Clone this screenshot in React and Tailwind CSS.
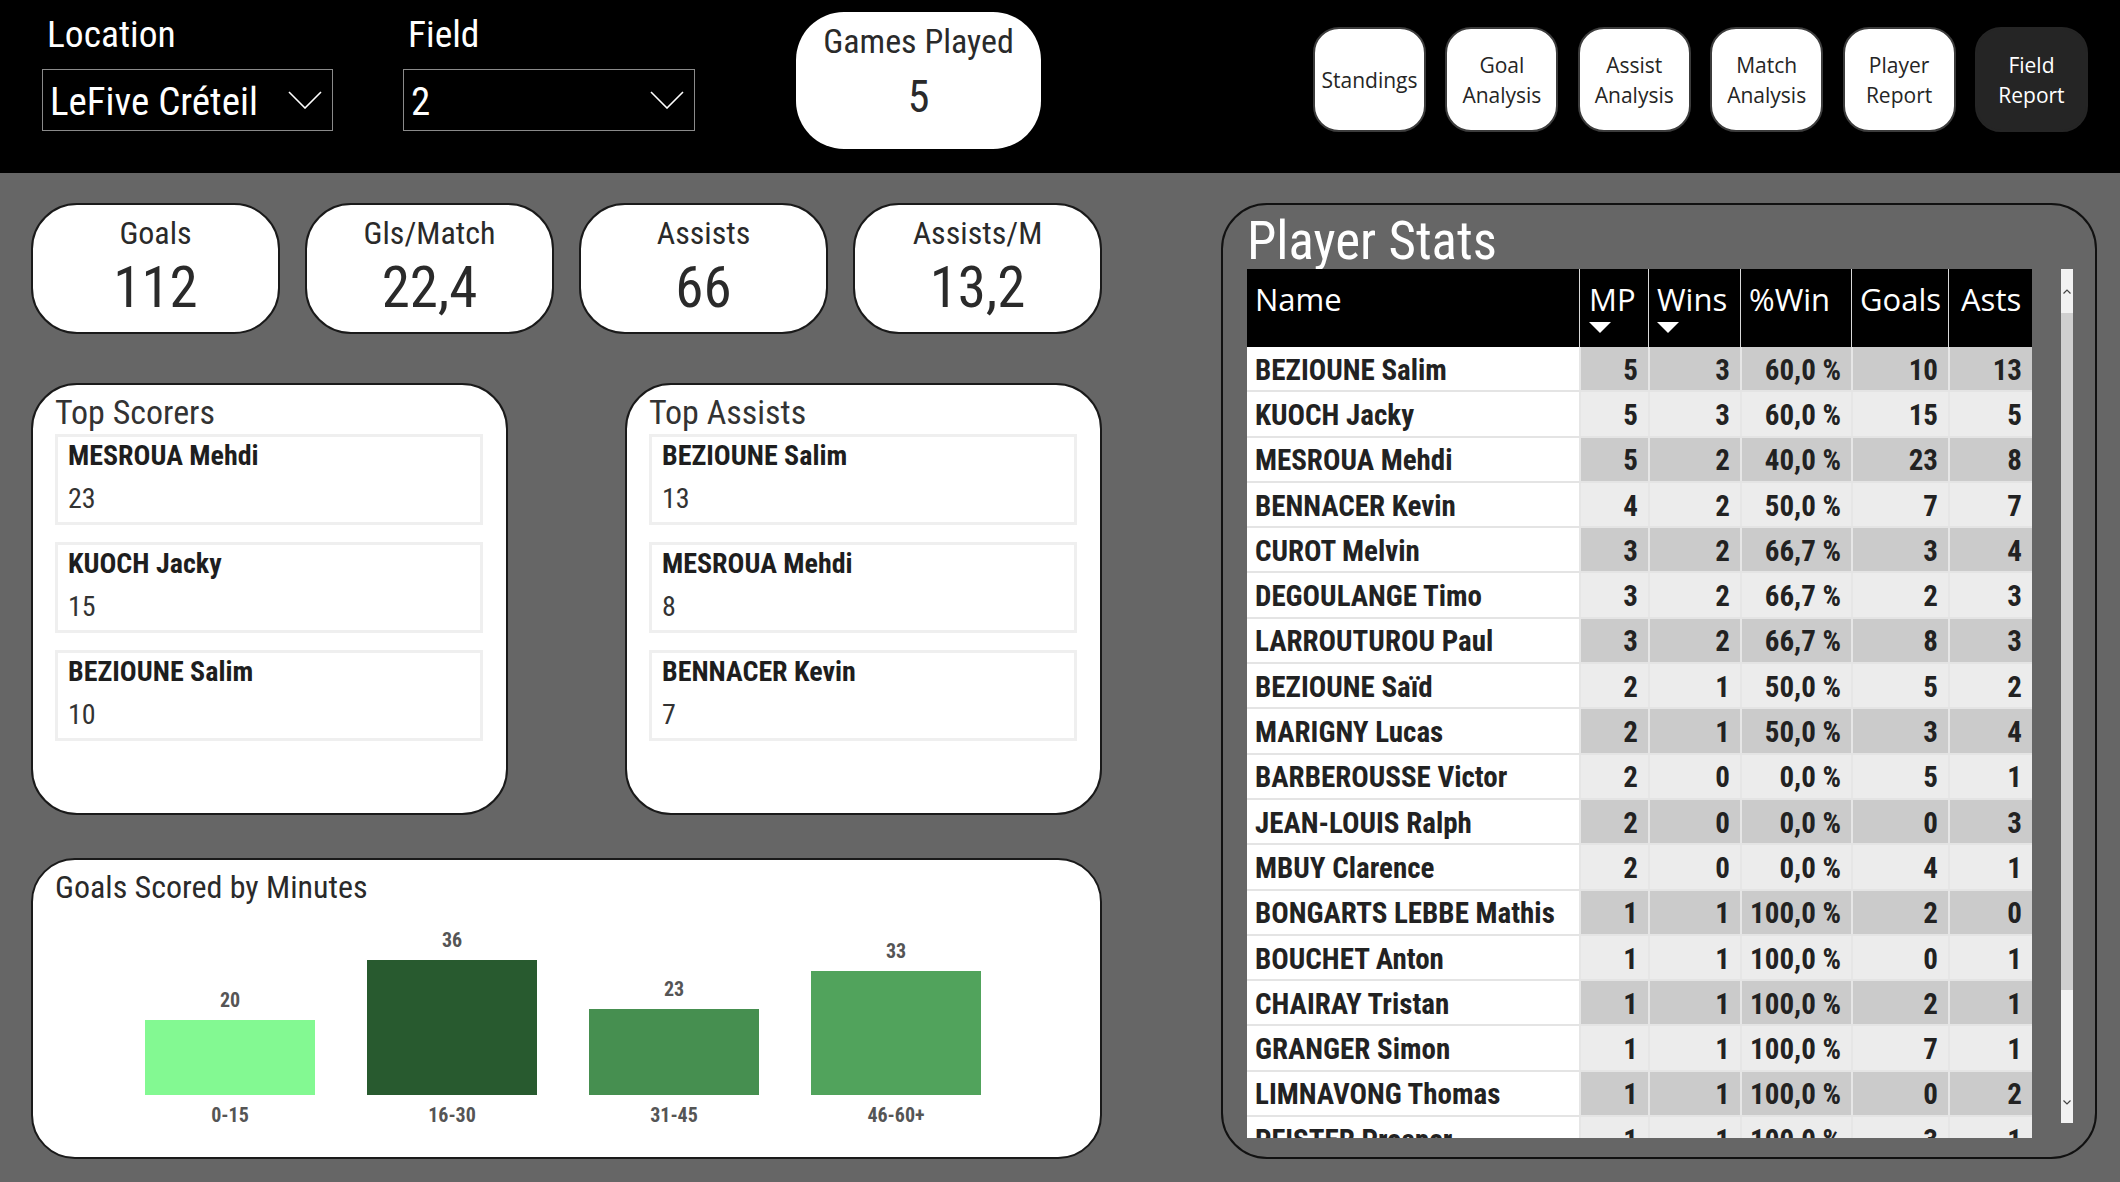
import React from "react";

const din = "font-['Roboto_Condensed','Roboto',sans-serif] font-stretch-[87.5%] whitespace-nowrap";
const segoe = "font-['Open_Sans',sans-serif] whitespace-nowrap";

const kpis = [
  { title: "Goals", value: "112" },
  { title: "Gls/Match", value: "22,4" },
  { title: "Assists", value: "66" },
  { title: "Assists/M", value: "13,2" },
];

const topScorers = [
  ["MESROUA Mehdi", 23],
  ["KUOCH Jacky", 15],
  ["BEZIOUNE Salim", 10],
];

const topAssists = [
  ["BEZIOUNE Salim", 13],
  ["MESROUA Mehdi", 8],
  ["BENNACER Kevin", 7],
];

const minutes = [
  { label: "0-15", value: 20, color: "bg-[#83f992]" },
  { label: "16-30", value: 36, color: "bg-[#285a2f]" },
  { label: "31-45", value: 23, color: "bg-[#468f50]" },
  { label: "46-60+", value: 33, color: "bg-[#51a35c]" },
];

const navItems = [
  ["Standings"],
  ["Goal", "Analysis"],
  ["Assist", "Analysis"],
  ["Match", "Analysis"],
  ["Player", "Report"],
  ["Field", "Report"],
];

const headers = [
  { label: "MP", pad: "pl-[9px]", sort: true },
  { label: "Wins", pad: "pl-[8px]", sort: true },
  { label: "%Win", pad: "pl-[8px]" },
  { label: "Goals", pad: "pl-[8px]" },
  { label: "Asts", pad: "pl-[12px]" },
];

const players = [
  ["BEZIOUNE Salim", 5, 3, "60,0 %", 10, 13],
  ["KUOCH Jacky", 5, 3, "60,0 %", 15, 5],
  ["MESROUA Mehdi", 5, 2, "40,0 %", 23, 8],
  ["BENNACER Kevin", 4, 2, "50,0 %", 7, 7],
  ["CUROT Melvin", 3, 2, "66,7 %", 3, 4],
  ["DEGOULANGE Timo", 3, 2, "66,7 %", 2, 3],
  ["LARROUTUROU Paul", 3, 2, "66,7 %", 8, 3],
  ["BEZIOUNE Saïd", 2, 1, "50,0 %", 5, 2],
  ["MARIGNY Lucas", 2, 1, "50,0 %", 3, 4],
  ["BARBEROUSSE Victor", 2, 0, "0,0 %", 5, 1],
  ["JEAN-LOUIS Ralph", 2, 0, "0,0 %", 0, 3],
  ["MBUY Clarence", 2, 0, "0,0 %", 4, 1],
  ["BONGARTS LEBBE Mathis", 1, 1, "100,0 %", 2, 0],
  ["BOUCHET Anton", 1, 1, "100,0 %", 0, 1],
  ["CHAIRAY Tristan", 1, 1, "100,0 %", 2, 1],
  ["GRANGER Simon", 1, 1, "100,0 %", 7, 1],
  ["LIMNAVONG Thomas", 1, 1, "100,0 %", 0, 2],
  ["PFISTER Prosper", 1, 1, "100,0 %", 3, 1],
];

const cols = "grid grid-cols-[332px_69px_92px_111px_97px_84px]";

function Chevron() {
  return (
    <svg width="34" height="18" viewBox="0 0 34 18">
      <polyline points="1,1 17,17 33,1" fill="none" stroke="white" strokeWidth="1.6" />
    </svg>
  );
}

function Dropdown({ value }) {
  return (
    <div className="mt-[13px] h-[62px] border border-[#8a8a8a] flex items-center justify-between pl-[7px] pr-[10px]">
      <span className={`${din} text-white text-[39px] leading-none pt-[4px]`}>{value}</span>
      <Chevron />
    </div>
  );
}

function SortArrow() {
  return (
    <svg width="22" height="11" viewBox="0 0 22 11" className="mt-[3px]">
      <polygon points="0,0 22,0 11,11" fill="white" />
    </svg>
  );
}

function TopList({ title, items }) {
  return (
    <div className="w-[477px] h-[432px] bg-white border-2 border-[#1a1a1a] rounded-[46px] pt-[7px] pl-[22px]">
      <div className={`${din} text-[34px] leading-[40px] text-[#333]`}>{title}</div>
      <div className="mt-[2px] flex flex-col gap-[17px]">
        {items.map(([name, val]) => (
          <div key={name} className="w-[428px] h-[91px] border-[3px] border-[#efefef] pl-[10px] pt-[3px]">
            <div className={`${din} font-bold text-[28px] leading-[32px] text-[#1e1e1e]`}>{name}</div>
            <div className={`${din} text-[28px] leading-[32px] text-[#333] mt-[11px]`}>{val}</div>
          </div>
        ))}
      </div>
    </div>
  );
}

export default function App() {
  return (
    <div className="w-[2120px] h-[1182px] overflow-hidden flex flex-col">
      {/* Header */}
      <header className="h-[173px] bg-black flex items-start shrink-0">
        <div className="ml-[42px] pt-[12px] w-[291px]">
          <div className={`${din} text-white text-[37.5px] leading-[44px] pl-[5px]`}>Location</div>
          <Dropdown value="LeFive Créteil" />
        </div>
        <div className="ml-[70px] pt-[12px] w-[292px]">
          <div className={`${din} text-white text-[37.5px] leading-[44px] pl-[5px]`}>Field</div>
          <Dropdown value="2" />
        </div>
        <div className="ml-[101px] mt-[12px] w-[245px] h-[137px] bg-white rounded-[48px] flex flex-col items-center pt-[9px]">
          <div className={`${din} text-[34px] leading-[40px] text-[#2a2a2a]`}>Games Played</div>
          <div className={`${din} text-[44px] leading-[50px] text-[#2a2a2a] mt-[11px]`}>5</div>
        </div>
        <nav className="ml-[272px] mt-[27px] flex gap-[19.4px]">
          {navItems.map((lines, i) => {
            const active = i === navItems.length - 1;
            return (
              <div
                key={lines.join(" ")}
                className={`w-[113px] h-[105px] rounded-[26px] border-2 flex flex-col items-center justify-center ${segoe} text-[21px] leading-[30px] ${
                  active ? "bg-[#252525] border-[#252525] text-white" : "bg-white border-[#3c3c3c] text-[#252525]"
                }`}
              >
                {lines.map((l) => (
                  <span key={l}>{l}</span>
                ))}
              </div>
            );
          })}
        </nav>
      </header>

      {/* Body */}
      <main className="flex-1 bg-[#666666] flex items-start pt-[30px] pl-[31px]">
        <div className="w-[1071px] flex flex-col">
          {/* KPI cards */}
          <div className="flex gap-[25px]">
            {kpis.map((k) => (
              <div key={k.title} className="w-[249px] h-[131px] bg-white border-2 border-[#1a1a1a] rounded-[46px] flex flex-col items-center pt-[8px]">
                <div className={`${din} text-[32px] leading-[40px] text-[#2a2a2a]`}>{k.title}</div>
                <div className={`${din} text-[57px] leading-[60px] text-[#2a2a2a] mt-[5px]`}>{k.value}</div>
              </div>
            ))}
          </div>

          {/* Top lists */}
          <div className="mt-[49px] flex gap-[117px]">
            <TopList title="Top Scorers" items={topScorers} />
            <TopList title="Top Assists" items={topAssists} />
          </div>

          {/* Goals by minutes */}
          <div className="mt-[43px] h-[301px] bg-white border-2 border-[#1a1a1a] rounded-[44px] pt-[7px] pl-[22px] flex flex-col">
            <div className={`${din} text-[32px] leading-[40px] text-[#2a2a2a]`}>Goals Scored by Minutes</div>
            <div className="h-[228px] flex items-end gap-[52px] pl-[90px]">
              {minutes.map((m) => (
                <div key={m.label} className="w-[170px] flex flex-col items-center">
                  <div className={`${din} font-bold text-[20px] leading-[28px] text-[#555] mb-[6px]`}>{m.value}</div>
                  <div className={`w-full ${m.color}`} style={{ height: `${m.value * 3.75}px` }} />
                  <div className={`${din} font-bold text-[20px] leading-[40px] text-[#555]`}>{m.label}</div>
                </div>
              ))}
            </div>
          </div>
        </div>

        {/* Player stats */}
        <div className="ml-[119px] w-[876px] h-[956px] border-2 border-[#111] rounded-[46px] pt-[8px] pl-[24px] flex flex-col">
          <div className={`${din} text-white text-[53px] leading-[56px]`}>Player Stats</div>
          <div className="flex items-start">
            <div className="w-[785px] h-[869px] overflow-hidden">
              <div className={`${cols} h-[78px] bg-black text-white ${segoe} text-[31px] leading-[40px]`}>
                <div className="pl-[8px] pt-[10px]">Name</div>
                {headers.map((h) => (
                  <div key={h.label} className={`border-l border-[#d8d8d8] ${h.pad} pt-[10px] flex flex-col`}>
                    <span>{h.label}</span>
                    {h.sort && <SortArrow />}
                  </div>
                ))}
              </div>
              {players.map((p, r) => {
                const shade = r % 2 === 0 ? "bg-[#cbcbcb]" : "bg-[#ececec]";
                return (
                  <div key={p[0]} className={`${cols} h-[45.3px] border-b-2 border-[#e4e4e4] ${din} font-bold text-[29px] leading-none text-[#222]`}>
                    <div className="bg-white pl-[8px] pt-[3px] flex items-center overflow-hidden">{p[0]}</div>
                    {p.slice(1).map((v, c) => (
                      <div key={c} className={`${shade} border-l-2 border-[#e6e6e6] pr-[10px] pt-[3px] flex items-center justify-end`}>
                        {v}
                      </div>
                    ))}
                  </div>
                );
              })}
            </div>
            <div className="ml-[29px] w-[12px] h-[854px] bg-[#f2f2f2] flex flex-col">
              <div className="h-[44px] flex items-center justify-center">
                <svg width="8" height="5" viewBox="0 0 8 5">
                  <polyline points="0.5,4.5 4,1 7.5,4.5" fill="none" stroke="#444" strokeWidth="1.2" />
                </svg>
              </div>
              <div className="h-[677px] bg-[#d0d0d0]" />
              <div className="flex-1 flex items-end justify-center pb-[18px]">
                <svg width="8" height="5" viewBox="0 0 8 5">
                  <polyline points="0.5,0.5 4,4 7.5,0.5" fill="none" stroke="#444" strokeWidth="1.2" />
                </svg>
              </div>
            </div>
          </div>
        </div>
      </main>
    </div>
  );
}
